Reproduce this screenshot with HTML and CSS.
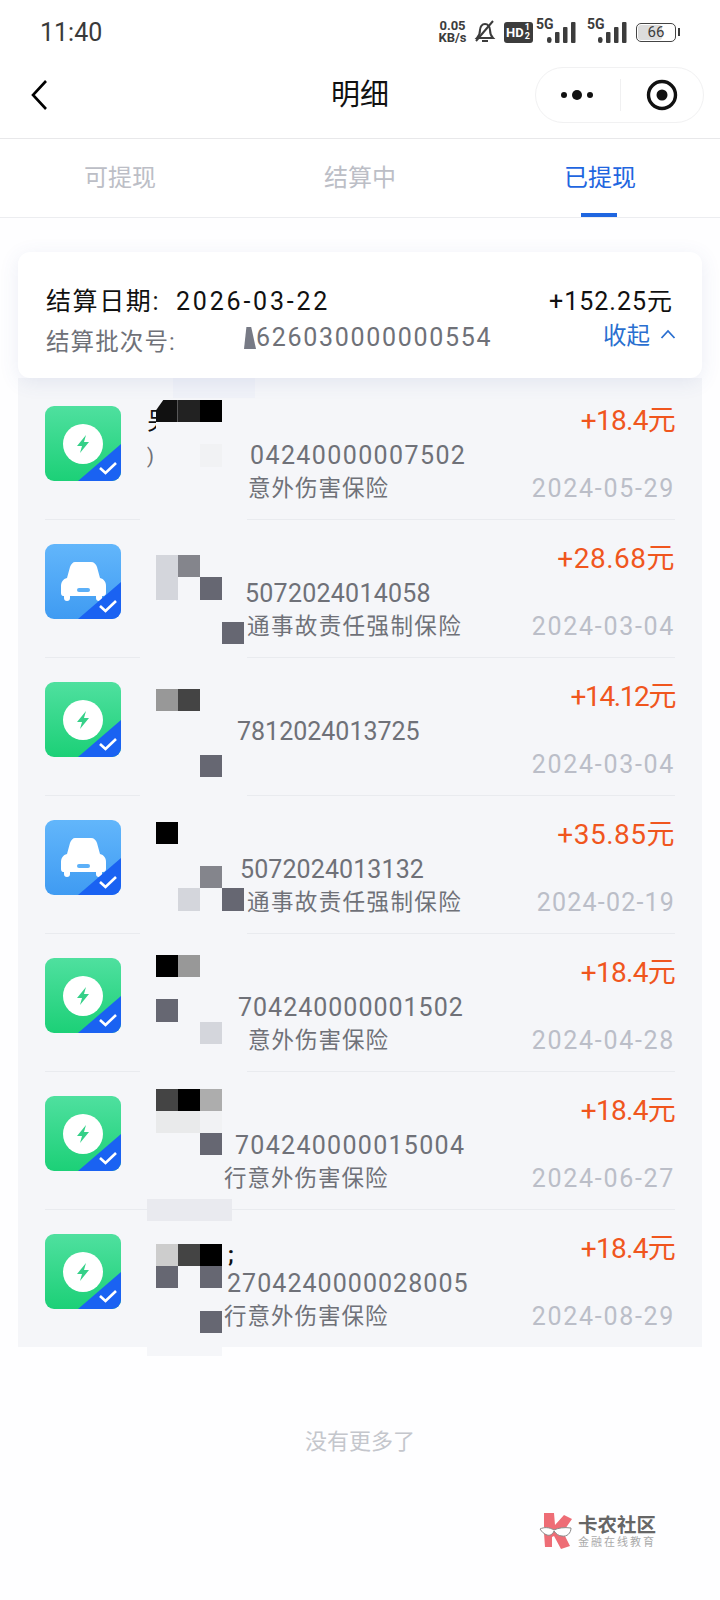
FILE: index.html
```html
<!DOCTYPE html>
<html lang="zh-CN">
<head>
  <meta charset="UTF-8" />
  <meta name="viewport" content="width=device-width, initial-scale=1.0" />
  <title>明细</title>
  <link rel="stylesheet" href="styles.css">
</head>
<body>
  <svg class="defs" width="0" height="0">
    <defs>
      <linearGradient id="greenBg" x1="0" y1="0" x2="0" y2="1">
        <stop offset="0" stop-color="#4fe09f"/>
        <stop offset="1" stop-color="#1cd077"/>
      </linearGradient>
      <linearGradient id="blueBg" x1="0" y1="0" x2="0" y2="1">
        <stop offset="0" stop-color="#62b6fb"/>
        <stop offset="1" stop-color="#3f9bf2"/>
      </linearGradient>
      <symbol id="icon-green" viewBox="0 0 76 75">
        <rect width="76" height="75" rx="9" fill="url(#greenBg)"/>
        <circle cx="38" cy="38" r="20" fill="#fff"/>
        <path d="M41 29 32 40h5l-2 7 9-11h-5z" fill="#35d088"/>
        <path d="M33 75 76 38v28a9 9 0 0 1-9 9z" fill="#1a62f2"/>
        <path d="M55 62l5.500 5L71 57" fill="none" stroke="#fff" stroke-width="2.600"/>
      </symbol>
      <symbol id="icon-blue" viewBox="0 0 76 75">
        <rect width="76" height="75" rx="9" fill="url(#blueBg)"/>
        <path d="M30 18h16c3 0 5 2 6 5l3 11c4 1 6 4 6 8v7c0 2-1 3-3 3h-1v2a3 3 0 0 1-6 0v-2H25v2a3 3 0 0 1-6 0v-2h-1c-1 0-2-1-2-3v-7c0-4 2-7 6-8l3-11c1-3 3-5 5-5z" fill="#fff"/>
        <rect x="32" y="44" width="13" height="4" rx="2" fill="#5cb0f8"/>
        <path d="M33 75 76 38v28a9 9 0 0 1-9 9z" fill="#1a62f2"/>
        <path d="M55 62l5.500 5L71 57" fill="none" stroke="#fff" stroke-width="2.600"/>
      </symbol>
      <symbol id="bars" viewBox="0 0 30 21">
        <rect x="0" y="15" width="4.500" height="6" rx="2.200"/>
        <rect x="8" y="10" width="4.500" height="11" rx="1"/>
        <rect x="16" y="5" width="4.500" height="16" rx="1"/>
        <rect x="24" y="0" width="4.500" height="21" rx="1"/>
      </symbol>
    </defs>
  </svg>

  <div class="status">
    <span class="clock">11:40</span>
    <div class="status-icons">
      <span class="speed">0.05<br>KB/s</span>
      <svg class="bell" width="22" height="24" viewBox="0 0 22 24">
        <path d="M3 18c2-2 3-4 3-8 0-3 2-6 5-6s5 3 5 6c0 4 1 6 3 8z M8 21h6" fill="none" stroke="#3c3c3c" stroke-width="2"/>
        <path d="M2 21 19 1" stroke="#3c3c3c" stroke-width="2"/>
      </svg>
      <span class="hd">HD<small>1<br>2</small></span>
      <span class="net"><b>5G</b><svg width="30" height="21"><use href="#bars"/></svg></span>
      <span class="net net-two"><b>5G</b><svg width="30" height="21"><use href="#bars"/></svg></span>
      <span class="battery"><i></i><em>66</em></span>
    </div>
  </div>

  <div class="nav">
    <svg class="back" width="18" height="32" viewBox="0 0 18 32"><path d="M16 2 3 16l13 14" fill="none" stroke="#000" stroke-width="2.600"/></svg>
    <div class="nav-title">明细</div>
    <div class="capsule">
      <svg width="36" height="12" viewBox="0 0 36 12"><circle cx="5" cy="6" r="3" fill="#111"/><circle cx="18" cy="6" r="5" fill="#111"/><circle cx="31" cy="6" r="3" fill="#111"/></svg>
      <span class="capsule-line"></span>
      <svg width="32" height="32" viewBox="0 0 32 32"><circle cx="16" cy="16" r="13.500" fill="none" stroke="#111" stroke-width="3.400"/><circle cx="16" cy="16" r="5.500" fill="#111"/></svg>
    </div>
  </div>

  <div class="tabs">
    <div class="tab">可提现</div>
    <div class="tab">结算中</div>
    <div class="tab active">已提现</div>
  </div>

  <div class="main">
    <div class="card">
      <div class="card-line">
        <div class="card-date"><span class="date-label">结算日期:</span>2026-03-22</div>
        <div class="card-sum">+152.25元</div>
      </div>
      <div class="card-line card-line2">
        <div class="card-batch"><span class="batch-label">结算批次号:</span><span class="batch-no">626030000000554</span><i class="batch-tile"></i></div>
        <div class="collapse">收起
          <svg width="16" height="10" viewBox="0 0 16 10"><path d="M1.500 9 8 2l6.500 7" fill="none" stroke="#2a6fd0" stroke-width="1.800"/></svg>
        </div>
      </div>
    </div>

    <div class="list">
      <div class="row">
        <svg class="pic" width="76" height="75"><use href="#icon-green"/></svg>
        <div class="body">
          <div class="line-no no1">04240000007502</div>
          <div class="line-type ty1">意外伤害保险</div>
        </div>
        <div class="right"><div class="amount a-one">+18.4元</div><div class="date">2024-05-29</div></div>
        <span class="frag frag-name">另</span>
        <span class="frag frag-no">)</span>
        <i class="band band-top"></i>
        <i class="seam"></i>
        <div class="mosaic m1">
          <i class="c-k1"></i><i class="c-k2"></i><i class="c-k"></i>
          <i class="c-bg"></i><i class="c-bg"></i><i class="c-bg"></i>
          <i></i><i></i><i class="c-q"></i>
        </div>
      </div>

      <div class="row">
        <svg class="pic" width="76" height="75"><use href="#icon-blue"/></svg>
        <div class="body">
          <div class="line-no no2">5072024014058</div>
          <div class="line-type ty2">通事故责任强制保险</div>
        </div>
        <div class="right"><div class="amount a-wide">+28.68元</div><div class="date">2024-03-04</div></div>
        <i class="seam"></i>
        <div class="mosaic m2">
          <i class="c-l"></i><i class="c-g"></i><i></i><i></i>
          <i class="c-l"></i><i></i><i class="c-s"></i><i></i>
          <i></i><i></i><i></i><i></i>
          <i></i><i></i><i></i><i class="c-s"></i>
        </div>
      </div>

      <div class="row">
        <svg class="pic" width="76" height="75"><use href="#icon-green"/></svg>
        <div class="body">
          <div class="line-no no3">7812024013725</div>
          <div class="line-type"></div>
        </div>
        <div class="right"><div class="amount a-two">+14.12元</div><div class="date">2024-03-04</div></div>
        <i class="seam"></i>
        <div class="mosaic m3">
          <i class="c-m"></i><i class="c-d"></i><i></i><i></i>
          <i></i><i></i><i></i><i></i>
          <i></i><i></i><i></i><i></i>
          <i></i><i></i><i class="c-s"></i>
        </div>
      </div>

      <div class="row">
        <svg class="pic" width="76" height="75"><use href="#icon-blue"/></svg>
        <div class="body">
          <div class="line-no no4">5072024013132</div>
          <div class="line-type ty2">通事故责任强制保险</div>
        </div>
        <div class="right"><div class="amount a-wide">+35.85元</div><div class="date d-narrow">2024-02-19</div></div>
        <i class="seam"></i>
        <div class="mosaic m4">
          <i class="c-k"></i><i></i><i></i><i></i>
          <i></i><i></i><i></i><i></i>
          <i></i><i></i><i class="c-g"></i><i></i>
          <i></i><i class="c-l"></i><i></i><i class="c-s"></i>
        </div>
      </div>

      <div class="row">
        <svg class="pic" width="76" height="75"><use href="#icon-green"/></svg>
        <div class="body">
          <div class="line-no no5">704240000001502</div>
          <div class="line-type ty1">意外伤害保险</div>
        </div>
        <div class="right"><div class="amount a-one">+18.4元</div><div class="date">2024-04-28</div></div>
        <i class="seam"></i>
        <div class="mosaic m5">
          <i class="c-k"></i><i class="c-m"></i><i></i>
          <i></i><i></i><i></i>
          <i class="c-s"></i><i></i><i></i>
          <i></i><i></i><i class="c-l"></i>
        </div>
      </div>

      <div class="row">
        <svg class="pic" width="76" height="75"><use href="#icon-green"/></svg>
        <div class="body">
          <div class="line-no no6">704240000015004</div>
          <div class="line-type ty6">行意外伤害保险</div>
        </div>
        <div class="right"><div class="amount a-one">+18.4元</div><div class="date">2024-06-27</div></div>
        <i class="seam seam-wide"></i>
        <div class="mosaic m6">
          <i class="c-d"></i><i class="c-k"></i><i class="c-h"></i>
          <i class="c-p"></i><i class="c-p"></i><i class="c-q"></i>
          <i></i><i></i><i class="c-s"></i>
        </div>
      </div>

      <div class="row row-last">
        <svg class="pic" width="76" height="75"><use href="#icon-green"/></svg>
        <div class="body">
          <div class="line-no no7">2704240000028005</div>
          <div class="line-type ty7">行意外伤害保险</div>
        </div>
        <div class="right"><div class="amount a-one">+18.4元</div><div class="date">2024-08-29</div></div>
        <span class="frag frag-semi">;</span>
        <i class="band band-bottom"></i>
        <div class="mosaic m7">
          <i class="c-l2"></i><i class="c-d"></i><i class="c-k"></i>
          <i class="c-s"></i><i></i><i class="c-s"></i>
          <i></i><i></i><i></i>
          <i></i><i></i><i class="c-s"></i>
        </div>
      </div>
    </div>

    <div class="nomore">没有更多了</div>

    <div class="mark">
      <svg width="36" height="36" viewBox="0 0 36 36">
        <path d="M5 0h10l1 12 9-10 8 4-9 13 7 14-9 3-7-13-2 1v10H6l-1-14z" fill="#ee6d76"/>
        <path d="M1 16c4-2 9-2 14 1 4-2 10-3 17-2 0 5-4 9-9 8-3 0-6-2-8-5-1 3-4 5-7 4-3-1-5-3-7-6z" fill="#fff" stroke="#8a8a8a" stroke-width="1"/>
      </svg>
      <div class="mark-text">
        <div class="mark-name">卡农社区</div>
        <div class="mark-sub">金融在线教育</div>
      </div>
    </div>
  </div>
</body>
</html>
```

FILE: styles.css
```css
* {
  box-sizing: border-box;
}
body {
  margin: 0;
  width: 720px;
  height: 1600px;
  overflow: hidden;
  background: #fefeff;
  font-family: Roboto, "Noto Sans CJK SC", sans-serif;
  color: #111;
}
.defs {
  position: absolute;
}

/* status bar */
.status {
  height: 56px;
  padding: 8px 40px 0 40px;
  display: flex;
  justify-content: space-between;
  align-items: center;
  background: #fff;
}
.clock {
  font-size: 25px;
  color: #3a3a3a;
}
.status-icons {
  display: flex;
  align-items: center;
  color: #3c3c3c;
  margin-right: 4px;
}
.speed {
  font-size: 13px;
  line-height: 12px;
  font-weight: 700;
  text-align: center;
  width: 31px;
}
.bell {
  margin-left: 6px;
}
.hd {
  margin-left: 8px;
  width: 29px;
  height: 21px;
  background: #3c3c3c;
  color: #fff;
  border-radius: 3px;
  font-size: 13px;
  font-weight: 700;
  display: flex;
  align-items: center;
  padding-left: 2px;
  line-height: 9px;
}
.hd small {
  font-size: 9px;
  margin-left: 1px;
}
.net {
  margin-left: 3px;
  width: 41px;
  height: 24px;
  position: relative;
  fill: #3c3c3c;
}
.net b {
  position: absolute;
  left: 0;
  top: -3px;
  font-size: 14px;
  line-height: 14px;
}
.net svg {
  position: absolute;
  left: 11px;
  top: 2px;
}
.net-two {
  margin-left: 10px;
  width: 40px;
}
.battery {
  margin-left: 9px;
  width: 40px;
  height: 19px;
  border: 1.500px solid #444;
  border-radius: 5px;
  position: relative;
  display: flex;
  justify-content: center;
  align-items: center;
  font-size: 15px;
}
.battery em {
  font-style: normal;
  position: relative;
}
.battery i {
  position: absolute;
  left: 1px;
  top: 1px;
  bottom: 1px;
  width: 24px;
  background: #dcdcdc;
  border-radius: 3px;
}
.battery::after {
  content: "";
  position: absolute;
  right: -5px;
  top: 4px;
  width: 2px;
  height: 8px;
  background: #3c3c3c;
}

/* nav */
.nav {
  height: 83px;
  padding: 0 16px 0 30px;
  background: #fff;
  border-bottom: 1px solid #e8e8ea;
  display: flex;
  align-items: center;
  justify-content: space-between;
  position: relative;
}
.back {
  margin-top: -4px;
}
.nav-title {
  position: absolute;
  left: 0;
  right: 0;
  top: 18px;
  text-align: center;
  font-size: 29px;
  line-height: 42px;
  color: #111;
}
.capsule {
  width: 169px;
  height: 56px;
  margin-top: -4px;
  border: 1px solid #f1f1f2;
  border-radius: 28px;
  display: flex;
  align-items: center;
  padding: 0 25px 0 23px;
  justify-content: space-between;
}
.capsule-line {
  width: 1px;
  height: 32px;
  background: #f0f0f1;
}

/* tabs */
.tabs {
  height: 79px;
  display: flex;
  background: #fff;
  border-bottom: 1px solid #ecedf0;
}
.tab {
  flex: 1;
  text-align: center;
  font-size: 24px;
  line-height: 78px;
  color: #bcbec6;
  position: relative;
}
.tab.active {
  color: #1f66e0;
}
.tab.active::after {
  content: "";
  position: absolute;
  left: 101px;
  bottom: 0;
  width: 36px;
  height: 4px;
  background: #1f66e0;
}

/* settlement card */
.main {
  padding: 34px 18px 0 18px;
}
.card {
  height: 126px;
  background: #fff;
  border-radius: 12px;
  box-shadow: 0 4px 20px rgba(70, 90, 160, 0.1);
  padding: 27px 29px 0 28px;
  position: relative;
  z-index: 2;
}
.card-line {
  display: flex;
  justify-content: space-between;
  align-items: center;
  height: 40px;
}
.card-line2 {
  margin-top: 1px;
}
.card-date {
  font-size: 25px;
  letter-spacing: 2.800px;
  color: #111;
}
.date-label {
  display: inline-block;
  width: 130px;
  letter-spacing: 1.600px;
}
.card-sum {
  font-size: 25px;
  letter-spacing: 1px;
}
.card-batch {
  font-size: 23.500px;
  letter-spacing: 1.100px;
  color: #6f7178;
  display: flex;
  position: relative;
}
.batch-label {
  width: 210px;
}
.batch-no {
  font-size: 25px;
  letter-spacing: 1.700px;
}
.batch-tile {
  position: absolute;
  left: 198px;
  top: 4px;
  width: 12px;
  height: 22px;
  background: #777a85;
  clip-path: polygon(20% 0, 60% 0, 100% 100%, 0 100%);
}
.collapse {
  font-size: 23.500px;
  color: #2a6fd0;
  display: flex;
  align-items: center;
  gap: 10px;
  margin-top: -12px;
  margin-right: -3px;
}

/* rows */
.list {
  background: #f5f6f9;
  padding: 4px 27px 0 27px;
  position: relative;
  z-index: 1;
  height: 969px;
}
.row {
  height: 138px;
  border-bottom: 1px solid #e9ebef;
  padding-top: 24px;
  display: flex;
  position: relative;
}
.row-last {
  border-bottom: none;
}
.pic {
  flex: none;
}
.body {
  width: 340px;
  margin-left: 27px;
  padding-top: 33px;
  flex: none;
  white-space: nowrap;
}
.line-no {
  font-size: 25px;
  line-height: 34px;
  letter-spacing: 1.400px;
  color: #6f7178;
}
.line-type {
  font-size: 22.500px;
  line-height: 31px;
  letter-spacing: 1px;
  color: #6f7178;
  height: 31px;
}
.no1 { margin-left: 102px; }
.no2 { margin-left: 97px; letter-spacing: 0.250px; }
.no3 { margin-left: 89px; letter-spacing: 0; }
.no4 { margin-left: 92px; letter-spacing: 0.100px; }
.no5 { margin-left: 90px; letter-spacing: 1px; }
.no6 { margin-left: 87px; letter-spacing: 1.300px; }
.no7 { margin-left: 79px; letter-spacing: 1.050px; }
.ty1 { margin-left: 100px; }
.ty2 { margin-left: 99px; letter-spacing: 1.400px; }
.ty6 { margin-left: 76px; }
.ty7 { margin-left: 76px; }
.right {
  flex: 1;
  text-align: right;
  display: flex;
  flex-direction: column;
  justify-content: space-between;
  height: 102px;
  margin-top: -3px;
  min-width: 0;
}
.amount {
  font-size: 28px;
  line-height: 36px;
  color: #f0561e;
}
.a-one { letter-spacing: -0.700px; }
.a-two { letter-spacing: -1.400px; }
.a-wide { letter-spacing: 0.500px; }
.date {
  font-size: 25px;
  line-height: 32px;
  letter-spacing: 1.700px;
  color: #bbbec8;
}
.d-narrow {
  letter-spacing: 1.200px;
}

/* pixelated blur that lies over the name column */
.mosaic {
  position: absolute;
  left: 110.500px;
  display: grid;
  grid-template-columns: repeat(4, 22.200px);
  grid-auto-rows: 22.200px;
}
.m1 { top: 18px; grid-template-columns: repeat(3, 22.200px); }
.m1 i:first-child { clip-path: polygon(35% 0, 100% 0, 100% 100%, 0 100%, 0 50%); }
.m2 { top: 35.300px; }
.m3 { top: 30.700px; }
.m4 { top: 25.800px; }
.m5 { top: 21px; grid-template-columns: repeat(3, 22.200px); }
.m6 { top: 16.700px; grid-template-columns: repeat(3, 22.200px); }
.m7 { top: 34px; grid-template-columns: repeat(3, 22.200px); }
.c-k { background: #000; }
.c-k1 { background: #111; }
.c-k2 { background: #222; }
.c-d { background: #444; }
.c-g { background: #84858c; }
.c-m { background: #989898; }
.c-h { background: #adadad; }
.c-l { background: #d4d6dc; }
.c-l2 { background: #cdcdcd; }
.c-s { background: #666772; }
.c-p { background: #e9eaeb; }
.c-q { background: #f1f2f4; }
.c-bg { background: #f5f6f9; }
.seam {
  position: absolute;
  left: 95px;
  bottom: -1px;
  width: 107px;
  height: 2px;
  background: #f5f6f9;
}
.seam-wide {
  left: 102px;
  width: 85px;
  height: 22px;
  bottom: -12px;
  background: #e9eaef;
  z-index: 1;
}
.band {
  position: absolute;
}
.band-top {
  left: 128px;
  top: -4px;
  width: 82px;
  height: 20px;
  background: #f0f2f8;
}
.band-bottom {
  left: 102px;
  bottom: -8px;
  width: 75px;
  height: 10px;
  background: #f5f6f9;
}
.frag {
  position: absolute;
  color: #111;
}
.frag-name {
  left: 102px;
  top: 24px;
  font-size: 24px;
  line-height: 30px;
}
.frag-no {
  left: 102px;
  top: 62px;
  font-size: 20px;
  line-height: 24px;
  color: #6f7178;
}
.frag-semi {
  left: 183px;
  top: 32px;
  font-size: 22px;
  font-weight: 700;
}

/* footer */
.nomore {
  margin-top: 79px;
  text-align: center;
  font-size: 22px;
  line-height: 32px;
  color: #c4c6cc;
}
.mark {
  margin-top: 55px;
  margin-left: 521px;
  display: flex;
  gap: 3px;
  align-items: center;
}
.mark-text {
  color: #666;
}
.mark-name {
  font-size: 19.500px;
  line-height: 22px;
  font-weight: 700;
  margin-top: 2px;
}
.mark-sub {
  font-size: 11px;
  line-height: 12px;
  letter-spacing: 2px;
  color: #aaa;
}
```
